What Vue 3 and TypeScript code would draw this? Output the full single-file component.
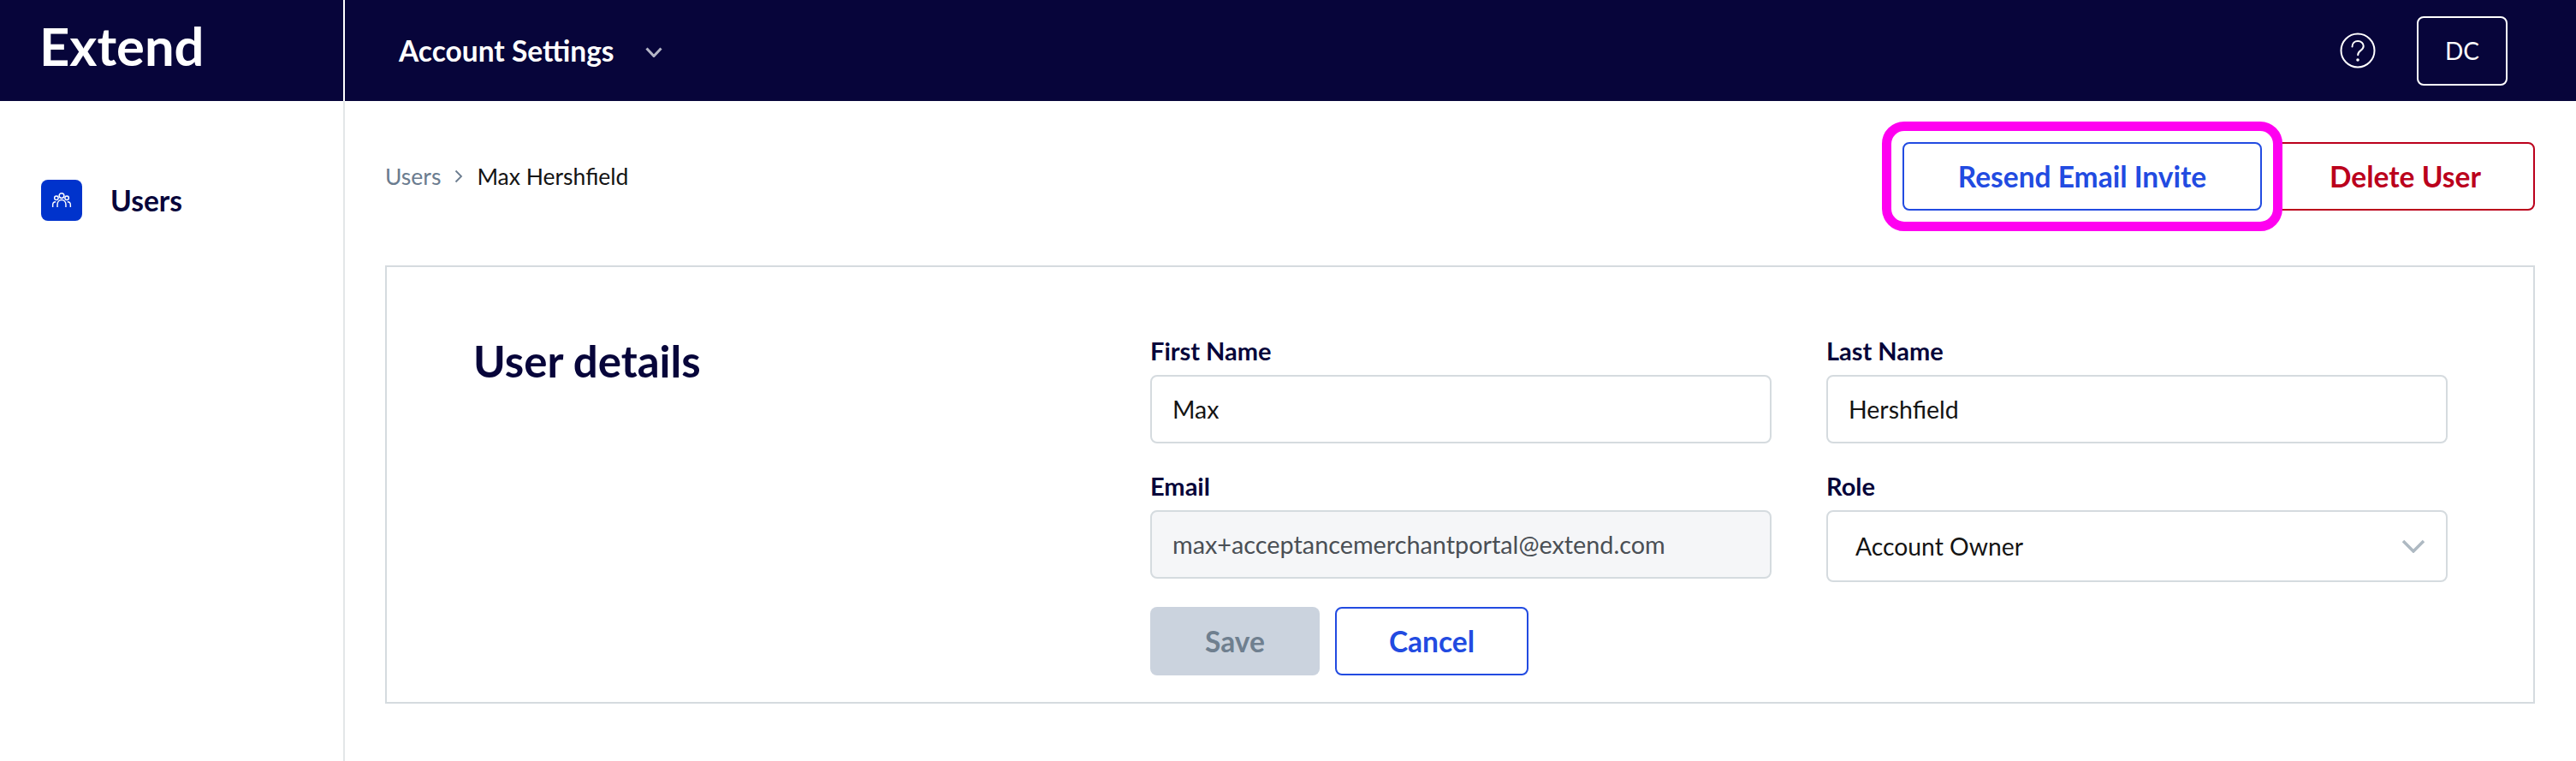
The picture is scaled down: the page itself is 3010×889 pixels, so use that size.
<template>
  <div class="app">
    <header class="topbar">
      <div class="brand">Extend</div>
      <div class="topbar-main">
        <button class="app-switch" type="button">
          <span>Account Settings</span>
          <svg class="switch-chevron" width="20" height="12" viewBox="0 0 20 12" fill="none">
            <path d="M1.500 1.500 10 10.500 18.500 1.500" stroke="#b4b6c6" stroke-width="3" />
          </svg>
        </button>
        <div class="topbar-right">
          <svg class="help" width="42" height="42" viewBox="0 0 42 42" fill="none">
            <circle cx="21" cy="21" r="19.500" stroke="#fff" stroke-width="2" />
            <path d="M14.500 16.500c0-4 3-6.500 6.600-6.500 3.800 0 6.600 2.500 6.600 5.800 0 2.600-1.500 4-3.400 5.300-1.900 1.300-3.100 2.400-3.100 5.100" stroke="#fff" stroke-width="2" stroke-linecap="round" />
            <circle cx="21" cy="32" r="1.800" fill="#fff" />
          </svg>
          <button class="avatar" type="button">DC</button>
        </div>
      </div>
    </header>

    <div class="body">
      <nav class="sidebar">
        <a class="nav-item">
          <span class="nav-icon">
            <svg width="24" height="18" viewBox="0 0 26 20" fill="none" stroke="#fff" stroke-width="1.600">
              <circle cx="13" cy="4" r="3.200" />
              <circle cx="6.200" cy="7" r="2.500" />
              <circle cx="19.800" cy="7" r="2.500" />
              <path d="M7.500 19v-3.500c0-3.500 2.500-6 5.500-6s5.500 2.500 5.500 6V19" />
              <path d="M1.500 19v-3c0-2.300 1.700-4 4-4" />
              <path d="M24.500 19v-3c0-2.300-1.700-4-4-4" />
            </svg>
          </span>
          <span class="nav-label">Users</span>
        </a>
      </nav>

      <main class="content">
        <div class="page-head">
          <div class="breadcrumbs">
            <span class="crumb-link">Users</span>
            <svg width="10" height="16" viewBox="0 0 10 16" fill="none">
              <path d="M1.500 1.500 8 8l-6.500 6.500" stroke="#6b7c8f" stroke-width="1.800" />
            </svg>
            <span class="crumb-current">{{ fullName }}</span>
          </div>
          <div class="page-actions">
            <button class="btn btn-outline btn-resend" type="button">
              Resend Email Invite
              <span class="highlight"></span>
            </button>
            <button class="btn btn-danger btn-delete" type="button">Delete User</button>
          </div>
        </div>

        <section class="card">
          <h2 class="card-title">User details</h2>
          <form class="form" @submit.prevent>
            <div class="grid">
              <label class="field">
                <span class="field-label">First Name</span>
                <input v-model="firstName" class="input" />
              </label>
              <label class="field">
                <span class="field-label">Last Name</span>
                <input v-model="lastName" class="input" />
              </label>
              <label class="field">
                <span class="field-label">Email</span>
                <input v-model="email" class="input input-disabled" disabled />
              </label>
              <div class="field">
                <span class="field-label">Role</span>
                <div class="select">
                  <span>{{ role }}</span>
                  <svg width="28" height="16" viewBox="0 0 28 16" fill="none">
                    <path d="M2 2l12 12L26 2" stroke="#aeb9c2" stroke-width="3.500" />
                  </svg>
                </div>
              </div>
            </div>
            <div class="form-actions">
              <button class="btn btn-save" type="submit" disabled>Save</button>
              <button class="btn btn-outline btn-cancel" type="button">Cancel</button>
            </div>
          </form>
        </section>
      </main>
    </div>
  </div>
</template>

<script setup lang="ts">
import { computed, ref } from 'vue'

const firstName = ref('Max')
const lastName = ref('Hershfield')
const email = ref('max+acceptancemerchantportal@extend.com')
const role = ref('Account Owner')

const fullName = computed(() => `${firstName.value} ${lastName.value}`)
</script>

<style>
html,
body {
  margin: 0;
  background: #fff;
}
</style>

<style scoped>
.app {
  height: 889px;
  overflow: hidden;
  display: flex;
  flex-direction: column;
  font-family: Lato, "Noto Sans", sans-serif;
  color: #07053a;
}

.topbar {
  height: 118px;
  flex: none;
  display: flex;
  background: #07053a;
  color: #fff;
}

.brand {
  flex: none;
  width: 403px;
  box-sizing: border-box;
  padding: 15px 0 0 46px;
  border-right: 2px solid #fff;
  font-size: 61.5px;
  line-height: 76px;
  font-weight: 700;
}

.topbar-main {
  flex: 1;
  display: flex;
  align-items: center;
  justify-content: space-between;
  padding: 0 80px 0 63px;
}

.app-switch {
  display: flex;
  align-items: center;
  gap: 36px;
  padding: 0;
  border: 0;
  background: none;
  color: #fff;
  font: 700 33.5px/40px Lato, "Noto Sans", sans-serif;
}

.switch-chevron {
  margin-top: 4px;
}

.topbar-right {
  display: flex;
  align-items: center;
  gap: 48px;
}

.help {
  display: block;
}

.avatar {
  width: 106px;
  height: 81px;
  box-sizing: border-box;
  border: 2px solid #fff;
  border-radius: 8px;
  background: none;
  color: #fff;
  font: 400 28px/36px Lato, "Noto Sans", sans-serif;
}

.body {
  flex: 1;
  display: flex;
}

.sidebar {
  width: 403px;
  box-sizing: border-box;
  flex: none;
  padding: 92px 0 0 48px;
  border-right: 2px solid #e3e6e8;
}

.nav-item {
  display: flex;
  align-items: center;
  gap: 33px;
}

.nav-icon {
  width: 48px;
  height: 48px;
  border-radius: 8px;
  background: #0033cc;
  display: flex;
  align-items: center;
  justify-content: center;
}

.nav-label {
  font-size: 33.5px;
  line-height: 40px;
  font-weight: 700;
}

.content {
  flex: 1;
  padding: 48px 48px 0 47px;
}

.page-head {
  display: flex;
  align-items: center;
  justify-content: space-between;
  margin-bottom: 64px;
}

.breadcrumbs {
  display: flex;
  align-items: center;
  gap: 16px;
  font-size: 26.5px;
  line-height: 36px;
}

.crumb-link {
  color: #6b7c8f;
}

.crumb-current {
  color: #141414;
}

.page-actions {
  display: flex;
  gap: 16px;
}

.btn {
  height: 80px;
  box-sizing: border-box;
  border-radius: 8px;
  border: 2px solid transparent;
  background: #fff;
  font: 700 33.5px/40px Lato, "Noto Sans", sans-serif;
  padding: 0;
}

.btn-outline {
  border-color: #224be1;
  color: #224be1;
}

.btn-danger {
  border-color: #bb001c;
  color: #bb001c;
}

.btn-resend {
  position: relative;
  width: 420px;
}

.btn-delete {
  width: 303px;
}

.highlight {
  position: absolute;
  inset: -26px;
  border: 11px solid #ff00f0;
  border-radius: 26px;
  pointer-events: none;
}

.card {
  display: flex;
  box-sizing: border-box;
  height: 512px;
  padding: 80px 100px 0 101px;
  border: 2px solid #d5dbdf;
}

.card-title {
  width: 791px;
  flex: none;
  margin: 0;
  font-size: 51px;
  line-height: 60px;
  font-weight: 700;
}

.form {
  flex: 1;
}

.grid {
  display: grid;
  grid-template-columns: 726px 726px;
  column-gap: 64px;
  row-gap: 32px;
  align-items: start;
}

.field {
  display: flex;
  flex-direction: column;
  gap: 10px;
}

.field-label {
  font-size: 29px;
  line-height: 36px;
  font-weight: 700;
}

.input {
  height: 80px;
  box-sizing: border-box;
  padding: 0 24px;
  border: 2px solid #d5dbdf;
  border-radius: 8px;
  background: #fff;
  color: #141414;
  font: 400 28.5px Lato, "Noto Sans", sans-serif;
  outline: none;
}

.input-disabled {
  background: #f5f6f8;
  color: #4a4f55;
  opacity: 1;
  font-size: 28.8px;
}

.select {
  height: 84px;
  box-sizing: border-box;
  display: flex;
  align-items: center;
  justify-content: space-between;
  padding: 0 24px 0 32px;
  border: 2px solid #d5dbdf;
  border-radius: 8px;
  color: #141414;
  font-size: 28.3px;
}

.form-actions {
  display: flex;
  gap: 18px;
  margin-top: 29px;
}

.btn-save {
  width: 198px;
  background: #cbd3de;
  color: #6f7f8f;
}

.btn-cancel {
  width: 226px;
}
</style>
